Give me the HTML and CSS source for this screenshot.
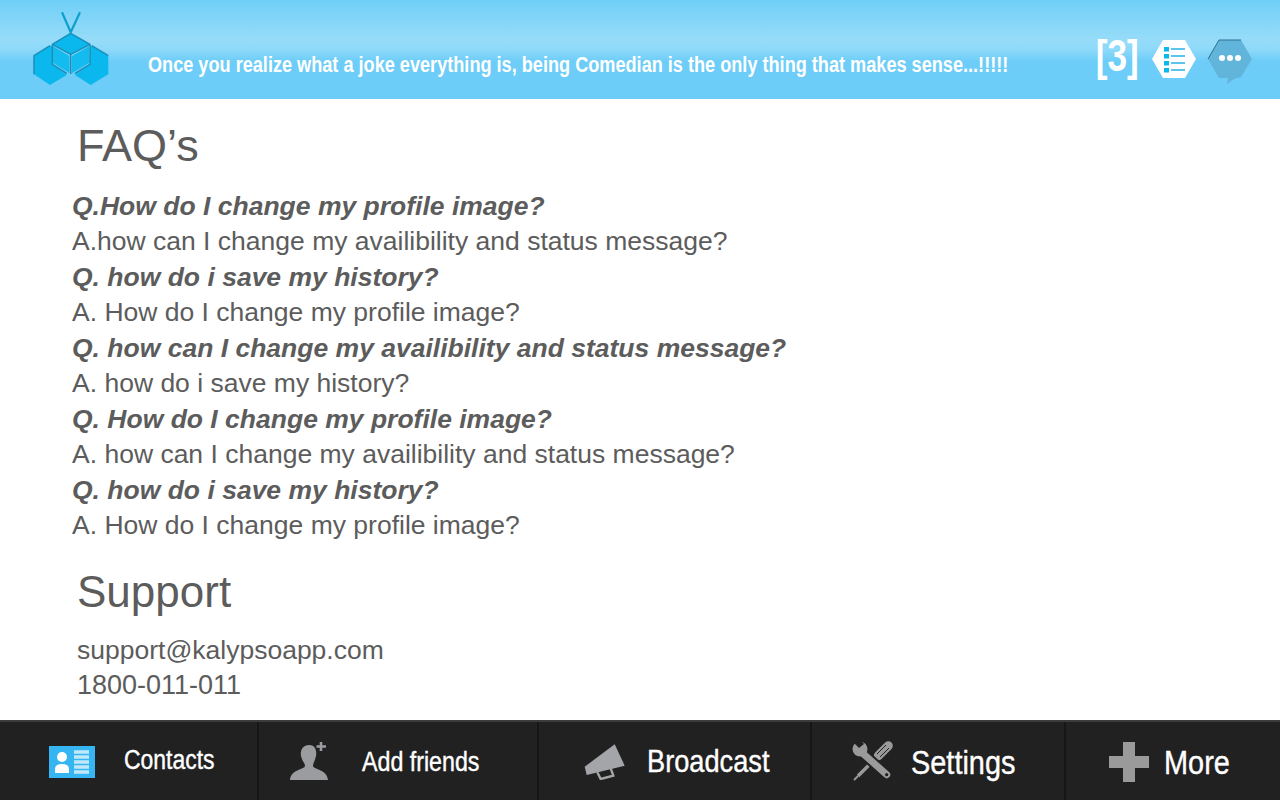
FILE: index.html
```html
<!DOCTYPE html>
<html>
<head>
  <title>FAQ</title>
  <link rel="stylesheet" href="styles.css">
</head>
<body>
  <div class="page">
    <header class="topbar">
      <svg class="logo" width="80" height="76" viewBox="0 0 80 76">
        <path d="M20 35.7 L4 45.7 V64.3 L20 75 L36.7 65 L22.3 54.3 V36 Z" fill="#0bb8ee"/>
        <path d="M61.7 35.7 L78.3 45.7 V64.3 L60.7 75 L45 65 L60 54.3 V36 Z" fill="#0bb8ee"/>
        <path d="M40.7 23.3 L60 34.3 L40.7 44.3 L22.3 34.3 Z" fill="#0bb8ee"/>
        <path d="M23 36 L39.5 46 V63 L23 53 Z M59 36 L42 46 V63 L59 53 Z" fill="#14bbee"/>
        <path d="M22.3 34.3 L40.7 23.3 L60 34.3 M22.3 34.3 L40.7 44.3 L60 34.3 M40.7 44.3 V64 M22.3 34.3 V54.3 L36.7 63.5 M60 34.3 V54.3 L45 63.5 M20 35.7 L4 45.7 V64.3 M61.7 35.7 L78.3 45.7" fill="none" stroke="#1a8fb8" stroke-width="1.5"/>
        <path d="M32 2.3 L40.7 22.3 L50 2.3" fill="none" stroke="#0f9fcd" stroke-width="2.2"/>
      </svg>
      <p class="tagline">Once you realize what a joke everything is, being Comedian is the only thing that makes sense...!!!!!</p>
      <div class="top-actions">
        <span class="count">[3]</span>
        <svg width="46" height="40" viewBox="0 0 46 40">
          <path d="M12 1 H34 L45 20 L34 39 H12 L1 20 Z" fill="#fff"/>
          <rect x="13" y="8" width="5" height="4.5" fill="#0bb8ee"/>
          <rect x="13" y="15" width="5" height="4.5" fill="#0bb8ee"/>
          <rect x="13" y="22" width="5" height="4.5" fill="#0bb8ee"/>
          <rect x="13" y="29" width="5" height="4.5" fill="#0bb8ee"/>
          <path d="M20 10 H34 M20 17 H34 M20 24 H34 M20 31 H34" stroke="#5cc3ea" stroke-width="2"/>
        </svg>
        <svg class="chat" width="46" height="46" viewBox="0 0 46 46">
          <path d="M12 1 H34 L45 20 L34 38 L27 40 L20 45 L21 39 H12 L1 20 Z" fill="#62b5da"/>
          <path d="M1 20 L12 1 H34" fill="none" stroke="#2c6f8f" stroke-width="1"/>
          <circle cx="15" cy="19" r="3" fill="#fff"/>
          <circle cx="23" cy="19" r="3" fill="#fff"/>
          <circle cx="31" cy="19" r="3" fill="#fff"/>
        </svg>
      </div>
    </header>

    <main class="content">
      <h2 class="title">FAQ’s</h2>
      <ul class="faq">
        <li class="q">Q.How do I change my profile image?</li>
        <li>A.how can I change my availibility and status message?</li>
        <li class="q">Q. how do i save my history?</li>
        <li>A. How do I change my profile image?</li>
        <li class="q">Q. how can I change my availibility and status message?</li>
        <li>A. how do i save my history?</li>
        <li class="q">Q. How do I change my profile image?</li>
        <li>A. how can I change my availibility and status message?</li>
        <li class="q">Q. how do i save my history?</li>
        <li>A. How do I change my profile image?</li>
      </ul>
      <h2 class="title support-title">Support</h2>
      <div class="support">
        <div>support@kalypsoapp.com</div>
        <div class="phone">1800-011-011</div>
      </div>
    </main>

    <nav class="tabs">
      <a class="tab tab-contacts">
        <svg width="46" height="32" viewBox="0 0 46 32">
          <rect width="46" height="32" fill="#35b6f2"/>
          <circle cx="13" cy="11" r="5" fill="#fff"/>
          <path d="M6 27 V23 Q6 18 13 18 Q20 18 20 23 V27 Z" fill="#fff"/>
          <path d="M25 6 H40 M25 11 H40 M25 16 H40 M25 21 H40 M25 26 H40" stroke="#bfe8fb" stroke-width="3.4"/>
        </svg>
        <span class="tab-label">Contacts</span>
      </a>
      <a class="tab tab-add">
        <svg width="40" height="38" viewBox="0 0 40 38">
          <path d="M20 3 C26 3 28 8 27 14 C26 19 24 21 24 24 C25 28 38 27 39 38 H1 C2 27 15 28 16 24 C16 21 13 19 12 14 C11 8 14 3 20 3 Z" fill="#9b9ca0"/>
          <path d="M32 0 V9 M27.5 4.5 H37" stroke="#9b9ca0" stroke-width="2.6"/>
        </svg>
        <span class="tab-label">Add friends</span>
      </a>
      <a class="tab tab-broadcast">
        <svg width="42" height="38" viewBox="0 0 42 38">
          <path d="M30.7 2.3 L40.7 23.7 L2.7 33 L0.7 24.7 Z" fill="#a4a5a8"/>
          <path d="M13.3 30.3 L16.7 37 L29.3 33.7 L26.7 26.3" fill="none" stroke="#a4a5a8" stroke-width="2.4"/>
        </svg>
        <span class="tab-label">Broadcast</span>
      </a>
      <a class="tab tab-settings">
        <svg width="42" height="42" viewBox="0 0 42 42">
          <path d="M37.3 5.7 L27.3 15.7" stroke="#9a9a9a" stroke-width="9" stroke-linecap="round"/>
          <path d="M35 5 L26 14 M38 8 L29 17" stroke="#212121" stroke-width="1"/>
          <path d="M25.7 17.3 L7 36" stroke="#9a9a9a" stroke-width="3.4"/>
          <path d="M7 36 L3 40" stroke="#9a9a9a" stroke-width="2"/>
          <path d="M10.7 12.3 L35.7 34.7" stroke="#212121" stroke-width="11"/>
          <circle cx="9" cy="9" r="7.5" fill="#9a9a9a"/>
          <path d="M10.7 12.3 L35.7 34.7" stroke="#9a9a9a" stroke-width="7" stroke-linecap="round"/>
          <path d="M8 8 L3 3 L9 -1 L13 4 Z" fill="#212121"/>
          <circle cx="35.7" cy="34.7" r="1.6" fill="#212121"/>
        </svg>
        <span class="tab-label">Settings</span>
      </a>
      <a class="tab tab-more">
        <svg width="40" height="40" viewBox="0 0 40 40">
          <path d="M14 0 H26 V14 H40 V26 H26 V40 H14 V26 H0 V14 H14 Z" fill="#9a9a9a"/>
        </svg>
        <span class="tab-label">More</span>
      </a>
    </nav>
  </div>
</body>
</html>
```

FILE: styles.css
```css
/* faq screen */

* {
  box-sizing: border-box;
}

body {
  margin: 0;
  background-color: #ffffff;
  font-family: "Liberation Sans", Arial, sans-serif;
  color: #5c5c5c;
}

.page {
  display: flex;
  flex-direction: column;
  width: 1280px;
  height: 800px;
  overflow: hidden;
}

.topbar {
  display: flex;
  align-items: center;
  height: 99px;
  padding-left: 30px;
  background: linear-gradient(to bottom, #70cff7 0%, #96dcf9 40%, #8dd9f9 50%, #6dcdf8 62%, #6ccdf8 100%);
}

.logo {
  flex: none;
  align-self: flex-start;
  margin-top: 10px;
}

.tagline {
  margin: 0 0 0 38px;
  padding-top: 31px;
  width: 860px;
  color: #ffffff;
  font-size: 22px;
  font-weight: bold;
  white-space: nowrap;
  transform: scaleX(0.824);
  transform-origin: left center;
}

.top-actions {
  position: absolute;
  top: 36px;
  right: 27px;
  display: flex;
  align-items: flex-start;
  gap: 10px;
}

.count {
  margin-right: 2px;
  color: #ffffff;
  font-size: 44px;
  font-weight: bold;
  line-height: 40px;
  transform: scaleX(0.8);
  transform-origin: right center;
}

.top-actions svg {
  margin-top: 3px;
}

.content {
  flex: 1;
  padding: 21px 0 0 72px;
}

.title {
  margin: 0 0 0 5px;
  font-size: 45px;
  font-weight: normal;
  line-height: 52px;
}

.faq {
  list-style-type: none;
  margin: 17px 0 0;
  padding: 0;
  font-size: 26.5px;
  line-height: 35.45px;
}

.q {
  font-weight: bold;
  font-style: italic;
}

.support-title {
  margin-top: 22px;
  font-size: 44px;
}

.support {
  margin: 15px 0 0 5px;
  font-size: 26.5px;
  line-height: 35px;
}

.phone {
  font-size: 27px;
}

.tabs {
  display: flex;
  height: 80px;
  background-color: #212121;
  border-top: 2px solid #3c3c3c;
}

.tab {
  display: flex;
  align-items: center;
  height: 100%;
  border-right: 2px solid #161616;
  color: #ffffff;
}

.tab-label {
  font-size: 29px;
  white-space: nowrap;
  -webkit-text-stroke: 0.4px #ffffff;
  transform: scaleX(0.85);
  transform-origin: left center;
}

.tab-contacts {
  width: 259px;
  padding-left: 49px;
}

.tab-contacts svg {
  margin-top: 2px;
}

.tab-contacts .tab-label {
  margin-left: 29px;
  margin-bottom: 2px;
  font-size: 27px;
}

.tab-add {
  width: 280px;
  padding-left: 30px;
}

.tab-add .tab-label {
  margin-left: 33px;
  margin-top: 3px;
  font-size: 27px;
  transform: scaleX(0.86);
}

.tab-broadcast {
  width: 273px;
  padding-left: 45px;
}

.tab-broadcast .tab-label {
  margin-left: 21px;
  margin-top: 1px;
  font-size: 32px;
}

.tab-settings {
  width: 254px;
  padding-left: 39px;
}

.tab-settings .tab-label {
  margin-left: 18px;
  margin-top: 3px;
  font-size: 34px;
}

.tab-more {
  flex: 1;
  padding-left: 43px;
  border-right: none;
}

.tab-more svg {
  margin-top: 2px;
}

.tab-more .tab-label {
  margin-left: 15px;
  margin-top: 3px;
  font-size: 34px;
}
```
